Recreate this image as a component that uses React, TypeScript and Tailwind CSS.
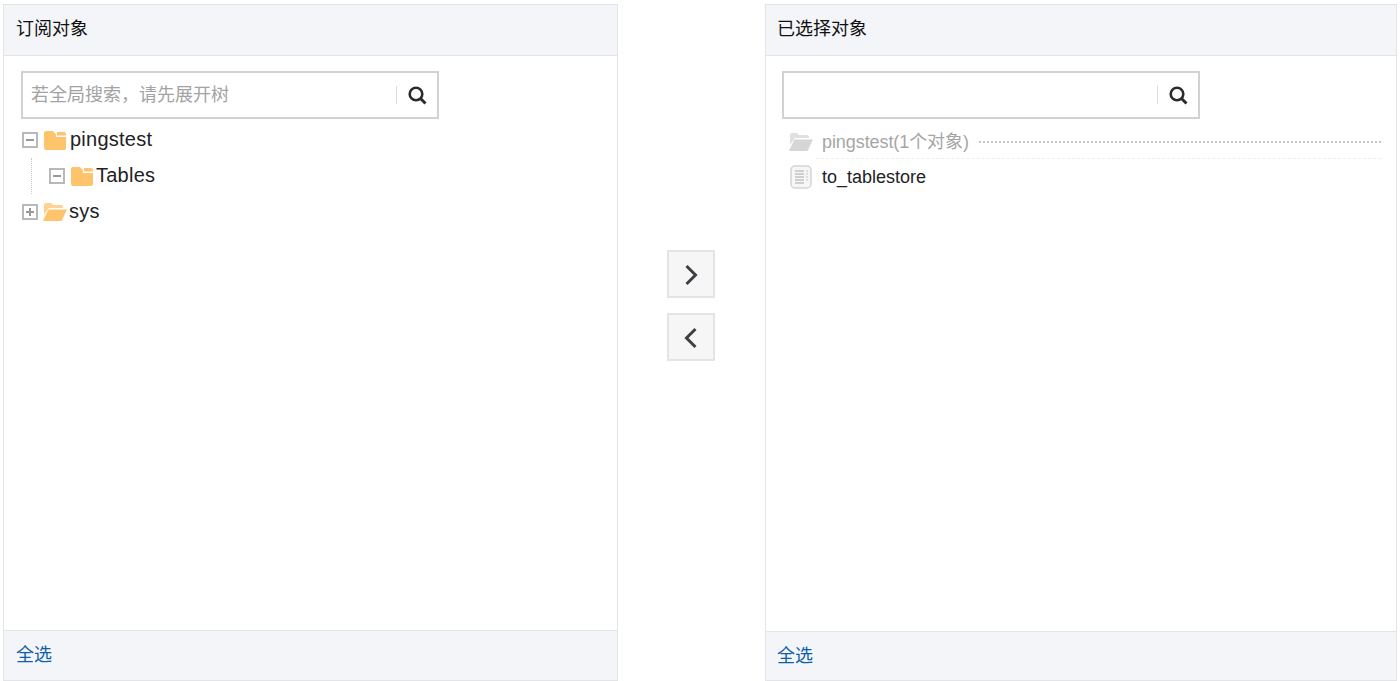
const FONT = "font-['Liberation_Sans','Noto_Sans_CJK_SC',sans-serif]";

function ToggleBox({ open }: { open: boolean }) {
  return (
    <span className="relative block h-[16px] w-[16px] shrink-0 border-2 border-[#b9b9b9] bg-white">
      <span className="absolute left-[2px] top-[5px] h-[2px] w-[8px] bg-[#9a9a9a]" />
      {!open && <span className="absolute left-[5px] top-[2px] h-[8px] w-[2px] bg-[#9a9a9a]" />}
    </span>
  );
}

function ClosedFolder() {
  return (
    <svg width="22" height="19" viewBox="0 0 22 19" className="shrink-0">
      <path d="M0 2a2 2 0 0 1 2-2h7l3 3.5V6h10v11a2 2 0 0 1-2 2H2a2 2 0 0 1-2-2z" fill="#fdc46c" />
      <path d="M13 1h7a2 2 0 0 1 2 2v1.6h-9z" fill="#fdc46c" />
    </svg>
  );
}

function OpenFolder({ color }: { color: string }) {
  return (
    <svg width="24" height="18" viewBox="0 0 24 18" className="shrink-0">
      <path d="M1 2a2 2 0 0 1 2-2h5l2 2h8a2 2 0 0 1 2 2v1H6L1 12z" fill={color} opacity="0.75" />
      <path d="M5.5 6.5H24L19.5 16a2 2 0 0 1-2 2H1.5a1 1 0 0 1-1-1.400z" fill={color} />
    </svg>
  );
}

function DocIcon() {
  return (
    <svg width="22" height="24" viewBox="0 0 22 24" className="shrink-0">
      <rect x="1" y="1" width="20" height="22" rx="4" fill="#f6f6f6" stroke="#d4d4d4" strokeWidth="1.500" />
      <path d="M5 6h9M5 9h9M5 12h9M5 15h9M5 18h9" stroke="#a8a8a8" strokeWidth="1.200" />
      <path d="M16 6h2M16 9h2M16 12h2M16 15h2" stroke="#c4c4c4" strokeWidth="1.200" />
    </svg>
  );
}

function SearchIcon() {
  return (
    <svg width="19" height="19" viewBox="0 0 19 19" className="shrink-0">
      <circle cx="8" cy="8" r="6.300" fill="none" stroke="#2b2b2b" strokeWidth="2.600" />
      <path d="M12.500 12.500L17.500 17.500" stroke="#2b2b2b" strokeWidth="3" />
    </svg>
  );
}

function SearchBox({ placeholder }: { placeholder?: string }) {
  return (
    <div className="flex h-[48px] w-[418px] items-center border-2 border-[#d2d2d2] bg-white">
      <span className="flex-1 pl-[8px] text-[18px] leading-none text-[#a3a3a3]">{placeholder}</span>
      <span className="h-[18px] w-px bg-[#dcdcdc]" />
      <span className="flex w-[40px] justify-center">
        <SearchIcon />
      </span>
    </div>
  );
}

function Panel({
  title,
  titleClass,
  footerClass,
  children,
}: {
  title: string;
  titleClass: string;
  footerClass: string;
  children: React.ReactNode;
}) {
  return (
    <div className="flex h-[677px] flex-col border border-[#e2e4e8] bg-white">
      <div className={`flex h-[51px] shrink-0 items-center border-b border-[#e2e4e8] bg-[#f4f5f9] pb-[2px] text-[18px] text-[#111111] ${titleClass}`}>
        {title}
      </div>
      <div className="flex-1 overflow-hidden">{children}</div>
      <div className={`flex shrink-0 items-center border-t border-[#e2e4e8] bg-[#f4f5f9] text-[18px] text-[#0f5fa8] ${footerClass}`}>
        全选
      </div>
    </div>
  );
}

function ArrowButton({ dir }: { dir: 'right' | 'left' }) {
  return (
    <button className="flex h-[48px] w-[48px] items-center justify-center border-2 border-[#e4e4e4] bg-[#f6f6f6] pt-[2px]">
      <svg width="14" height="24" viewBox="0 0 14 24">
        <path
          d={dir === 'right' ? 'M2.500 3l9 9-9 9' : 'M11.500 3l-9 9 9 9'}
          fill="none"
          stroke="#3c3f44"
          strokeWidth="3"
        />
      </svg>
    </button>
  );
}

export default function App() {
  return (
    <div className={`${FONT} flex h-[681px] w-[1400px] overflow-hidden bg-white pl-[3px] pt-[4px]`}>
      <div className="w-[615px] shrink-0">
        <Panel title="订阅对象" titleClass="pl-[12px]" footerClass="h-[50px] pl-[12px]">
          <div className="pl-[17px] pt-[15px]">
            <SearchBox placeholder="若全局搜索，请先展开树" />
            <div className="mt-[3px] text-[20px] leading-none tracking-[0.25px] text-[#222222]">
              <div className="flex h-[36px] items-center pl-px">
                <ToggleBox open />
                <span className="ml-[6px]"><ClosedFolder /></span>
                <span className="ml-[4px] -translate-y-px">pingstest</span>
              </div>
              <div className="ml-[10px] flex h-[36px] items-center border-l border-dotted border-[#c8c8c8] pl-[17px]">
                <ToggleBox open />
                <span className="ml-[6px]"><ClosedFolder /></span>
                <span className="ml-[3px] -translate-y-px">Tables</span>
              </div>
              <div className="flex h-[36px] items-center pl-px">
                <ToggleBox open={false} />
                <span className="ml-[5px]"><OpenFolder color="#fdc46c" /></span>
                <span className="ml-[2px] -translate-y-px">sys</span>
              </div>
            </div>
          </div>
        </Panel>
      </div>

      <div className="ml-[49px] flex w-[48px] shrink-0 flex-col gap-[15px] pt-[246px]">
        <ArrowButton dir="right" />
        <ArrowButton dir="left" />
      </div>

      <div className="ml-[50px] w-[632px] shrink-0">
        <Panel title="已选择对象" titleClass="pl-[11px]" footerClass="h-[49px] pl-[11px]">
          <div className="pl-[16px] pt-[15px]">
            <SearchBox />
            <div className="flex h-[30px] items-center pl-[7px] pt-[16px] text-[18px] leading-none text-[#a6a6a6]">
              <OpenFolder color="#d6d6d6" />
              <span className="ml-[9px] tracking-[-0.08px]">pingstest(1个对象)</span>
              <span className="ml-[10px] mr-[15px] h-0 flex-1 border-t-2 border-dotted border-[#c4c4c4]" />
            </div>
            <div className="mr-[15px] ml-[34px] mt-[9px] h-0 border-t border-dashed border-[#eeeeee]" />
            <div className="mt-[3px] flex h-[30px] items-center pl-[8px] text-[18px] leading-none text-[#222222]">
              <DocIcon />
              <span className="ml-[10px]">to_tablestore</span>
            </div>
          </div>
        </Panel>
      </div>
    </div>
  );
}
